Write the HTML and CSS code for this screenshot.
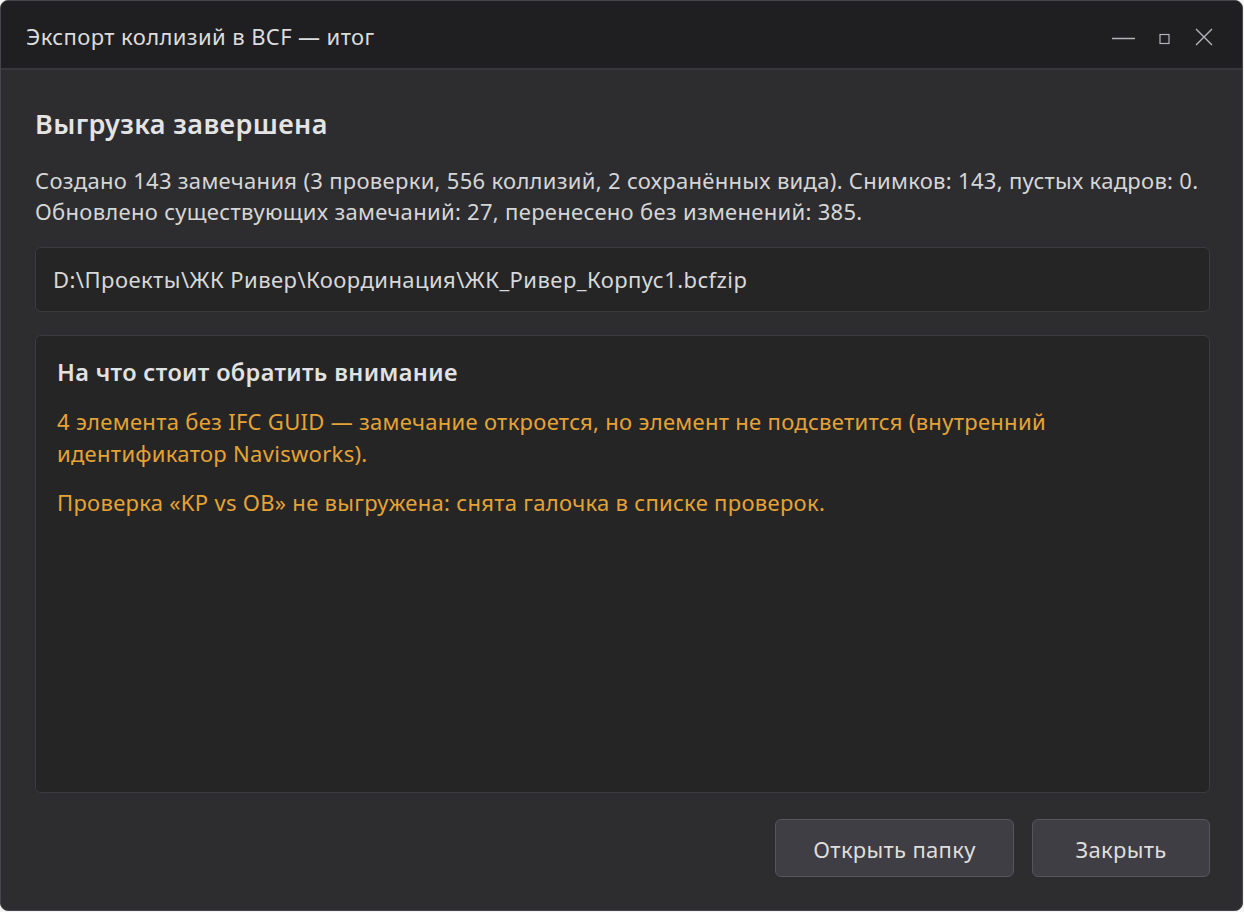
FILE: index.html
```html
<!DOCTYPE html>
<html lang="ru">
<head>
<meta charset="utf-8">
<link rel="stylesheet" href="styles.css">
</head>
<body>
<div class="window">
  <div class="titlebar">
    <div class="title">Экспорт коллизий в BCF — итог</div>
    <div class="controls">
      <svg class="ctl" width="24" height="24" viewBox="0 0 24 24"><path d="M0 12.5H23" stroke="#b4b4b8" stroke-width="1.4"/></svg>
      <svg class="ctl" width="12" height="12" viewBox="0 0 12 12"><rect x="1" y="1.5" width="9" height="9" fill="none" stroke="#b4b4b8" stroke-width="1.2"/></svg>
      <svg class="ctl" width="18" height="18" viewBox="0 0 18 18"><path d="M1 1L17 17M17 1L1 17" stroke="#b4b4b8" stroke-width="1.4"/></svg>
    </div>
  </div>
  <div class="content">
    <h1 class="heading">Выгрузка завершена</h1>
    <p class="summary">Создано 143 замечания (3 проверки, 556 коллизий, 2 сохранённых вида). Снимков: 143, пустых кадров: 0.<br>Обновлено существующих замечаний: 27, перенесено без изменений: 385.</p>
    <div class="path">D:\Проекты\ЖК Ривер\Координация\ЖК_Ривер_Корпус1.bcfzip</div>
    <div class="notes">
      <h2 class="notes-title">На что стоит обратить внимание</h2>
      <p class="warn">4 элемента без IFC GUID — замечание откроется, но элемент не подсветится (внутренний идентификатор Navisworks).</p>
      <p class="warn">Проверка «KP vs OB» не выгружена: снята галочка в списке проверок.</p>
    </div>
    <div class="buttons">
      <button class="btn btn-wide">Открыть папку</button>
      <button class="btn">Закрыть</button>
    </div>
  </div>
</div>
</body>
</html>
```

FILE: styles.css
```css
html, body {
  margin: 0;
  padding: 0;
  background: #f4f4f4;
}
body {
  width: 1244px;
  height: 912px;
  font-family: "Noto Sans", "Open Sans", sans-serif;
}
.window {
  box-sizing: border-box;
  width: 1243px;
  height: 911px;
  border: 1px solid #45454b;
  border-radius: 8px;
  background: #2d2d30;
  overflow: hidden;
  display: flex;
  flex-direction: column;
}
.titlebar {
  height: 67px;
  flex: none;
  background: #1f1f22;
  border-bottom: 2px solid #38383c;
  display: flex;
  align-items: center;
  justify-content: space-between;
  padding: 0 29px 0 25px;
}
.title {
  color: #dcdcdc;
  font-size: 22px;
  letter-spacing: 0.4px;
  margin-top: 2px;
}
.controls {
  display: flex;
  align-items: center;
  margin-top: 5px;
}
.controls .ctl:nth-child(1) { margin-right: 23px; margin-top: 1px; }
.controls .ctl:nth-child(2) { margin-right: 24px; margin-top: 3px; }
.content {
  flex: 1;
  display: flex;
  flex-direction: column;
  padding: 0 32px 0 34px;
}
.heading {
  margin: 38px 0 0 0;
  font-size: 27px;
  letter-spacing: 0.4px;
  font-weight: 600;
  color: #e4e4e4;
  line-height: 32px;
}
.summary {
  margin: 25px 0 0 0;
  font-size: 22px;
  letter-spacing: 0.3px;
  line-height: 31px;
  color: #d6d6d6;
}
.path {
  margin-top: 20px;
  height: 65px;
  box-sizing: border-box;
  border: 1px solid #3b3b40;
  border-radius: 6px;
  background: #252526;
  color: #d8d8d8;
  font-size: 22px;
  letter-spacing: 0.45px;
  display: flex;
  align-items: center;
  padding: 0 17px 1px;
}
.notes {
  margin-top: 23px;
  height: 458px;
  box-sizing: border-box;
  border: 1px solid #3b3b40;
  border-radius: 6px;
  background: #252526;
  padding: 21px 21px;
}
.notes-title {
  margin: 0;
  font-size: 23.5px;
  letter-spacing: 0.35px;
  font-weight: 600;
  color: #e2e2e2;
  line-height: 30px;
}
.warn {
  margin: 18px 0 0 0;
  color: #e5a335;
  font-size: 22px;
  letter-spacing: 0.3px;
  line-height: 32px;
}
.warn + .warn {
  margin-top: 17px;
}
.buttons {
  display: flex;
  justify-content: flex-end;
  gap: 18px;
  margin-top: 26px;
}
.btn {
  height: 58px;
  width: 178px;
  border: 1px solid #55555b;
  border-radius: 6px;
  background: #3e3e44;
  color: #dedede;
  font-family: "Noto Sans", "Open Sans", sans-serif;
  font-size: 22px;
  letter-spacing: 0.3px;
  padding: 2px 0 0;
}
.btn-wide {
  width: 239px;
}
```
